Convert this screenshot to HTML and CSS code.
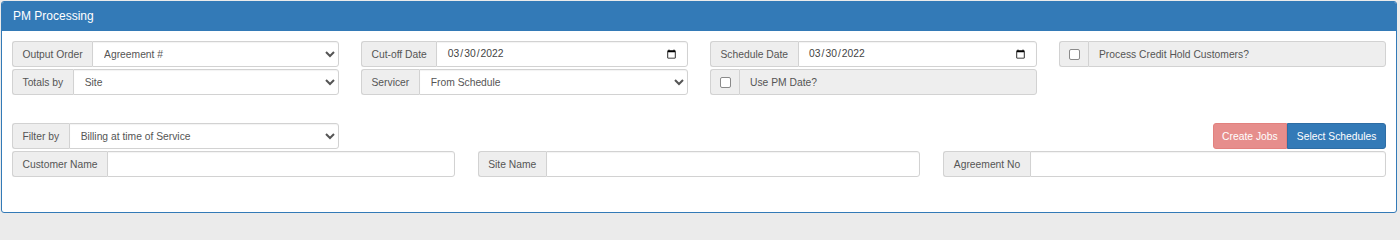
FILE: index.html
```html
<!DOCTYPE html>
<html lang="en">
<head>
<meta charset="utf-8">
<title>PM Processing</title>
<link rel="stylesheet" href="styles.css">
</head>
<body>
<div class="panel">
  <div class="panel-heading">PM Processing</div>
  <div class="panel-body">
    <div class="grid4">
      <div class="col">
        <div class="igroup">
          <span class="addon">Output Order</span>
          <select class="ctrl"><option>Agreement #</option></select>
        </div>
        <div class="igroup">
          <span class="addon">Totals by</span>
          <select class="ctrl"><option>Site</option></select>
        </div>
      </div>
      <div class="col">
        <div class="igroup">
          <span class="addon">Cut-off Date</span>
          <input class="ctrl date" type="date" value="2022-03-30">
        </div>
        <div class="igroup">
          <span class="addon">Servicer</span>
          <select class="ctrl"><option>From Schedule</option></select>
        </div>
      </div>
      <div class="col">
        <div class="igroup">
          <span class="addon">Schedule Date</span>
          <input class="ctrl date" type="date" value="2022-03-30">
        </div>
        <div class="igroup">
          <span class="addon chk"><input type="checkbox"></span>
          <span class="ctrl label-field">Use PM Date?</span>
        </div>
      </div>
      <div class="col">
        <div class="igroup">
          <span class="addon chk"><input type="checkbox"></span>
          <span class="ctrl label-field">Process Credit Hold Customers?</span>
        </div>
      </div>
    </div>

    <div class="filter-row">
      <div class="igroup filter">
        <span class="addon">Filter by</span>
        <select class="ctrl"><option>Billing at time of Service</option></select>
      </div>
      <div class="btn-group">
        <button class="btn btn-danger" disabled>Create Jobs</button>
        <button class="btn btn-primary">Select Schedules</button>
      </div>
    </div>

    <div class="grid3">
      <div class="igroup">
        <span class="addon">Customer Name</span>
        <input class="ctrl" type="text">
      </div>
      <div class="igroup">
        <span class="addon">Site Name</span>
        <input class="ctrl" type="text">
      </div>
      <div class="igroup">
        <span class="addon">Agreement No</span>
        <input class="ctrl" type="text">
      </div>
    </div>
  </div>
</div>
</body>
</html>
```

FILE: styles.css
```css
html, body {
  margin: 0;
  padding: 0;
  background: #ebebeb;
}
body {
  padding: 1px 0 0 1px;
  font-family: "Liberation Sans", Arial, sans-serif;
  color: #555;
}
.panel {
  width: 1396px;
  height: 212px;
  box-sizing: border-box;
  background: #fff;
  border: 1px solid #337ab7;
  border-radius: 3px;
  overflow: hidden;
}
.panel-heading {
  background: #337ab7;
  color: #fff;
  font-size: 12px;
  height: 29px;
  line-height: 28px;
  padding: 0 11px;
}
.panel-body {
  padding: 10px 10px 0 10px;
}
.grid4 {
  display: grid;
  grid-template-columns: repeat(4, 1fr);
  column-gap: 22px;
}
.col {
  display: flex;
  flex-direction: column;
  gap: 2px;
}
.igroup {
  display: flex;
  height: 26px;
  font-size: 10.3px;
}
.addon {
  display: flex;
  align-items: center;
  padding: 0 9.5px;
  background: #eee;
  border: 1px solid #d2d2d2;
  border-right: 0;
  border-radius: 3px 0 0 3px;
  color: #555;
  white-space: nowrap;
}
.addon.chk {
  padding: 0 8.5px;
}
.addon.chk input {
  appearance: none;
  -webkit-appearance: none;
  box-sizing: border-box;
  width: 11px;
  height: 11px;
  margin: 0;
  background: #fff;
  border: 1px solid #8a8a8a;
  border-radius: 2px;
}
.ctrl {
  flex: 1;
  min-width: 0;
  box-sizing: border-box;
  height: 26px;
  margin: 0;
  border: 1px solid #d2d2d2;
  border-radius: 0 3px 3px 0;
  background: #fff;
  color: #555;
  font-family: "Liberation Sans", Arial, sans-serif;
  font-size: 10.3px;
  padding: 0 8.5px;
  box-shadow: inset 0 1px 1px rgba(0,0,0,.05);
  outline: none;
}
select.ctrl {
  padding: 0 7px;
}
.ctrl.date {
  color: #444;
  padding: 0 8.5px 0 9.5px;
}
.label-field {
  display: flex;
  align-items: center;
  background: #eee;
  padding: 0 10px;
  box-shadow: none;
}
.filter-row {
  display: flex;
  justify-content: space-between;
  align-items: center;
  margin-top: 28px;
}
.filter {
  width: 327px;
}
.btn-group {
  display: flex;
  height: 26px;
}
.btn {
  font-family: "Liberation Sans", Arial, sans-serif;
  font-size: 10.3px;
  color: #fff;
  border: 1px solid transparent;
  padding: 0 8.6px;
  margin: 0;
  height: 26px;
}
.btn-danger {
  background: #d9534f;
  border-color: #d43f3a;
  opacity: .65;
  border-radius: 3px 0 0 3px;
}
.btn-primary {
  background: #337ab7;
  border-color: #2e6da4;
  border-radius: 0 3px 3px 0;
}
.grid3 {
  display: grid;
  grid-template-columns: repeat(3, 1fr);
  column-gap: 23px;
  margin-top: 2px;
}
```
